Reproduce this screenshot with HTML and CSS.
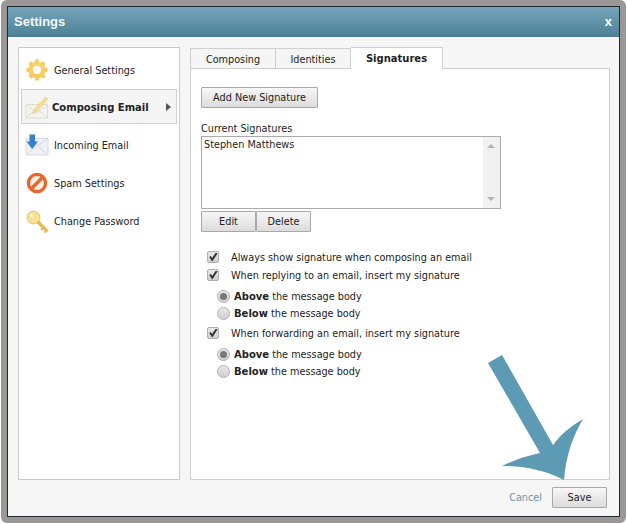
FILE: index.html
```html
<!DOCTYPE html>
<html lang="en">
<head>
<meta charset="utf-8">
<title>Settings</title>
<link rel="stylesheet" href="styles.css">
</head>
<body>
<div class="frame">
  <div class="window">
    <header class="titlebar"><span class="title">Settings</span><span class="close">x</span></header>
    <div class="main">
      <nav class="nav">
        <a class="nav-item">
          <svg class="nav-icon" viewBox="0 0 24 24"><defs><radialGradient id="g1" cx="50%" cy="40%" r="60%"><stop offset="0" stop-color="#ffe9a0"/><stop offset="1" stop-color="#f6c24e"/></radialGradient></defs><circle cx="12" cy="12" r="8.500" fill="url(#g1)"/><g stroke="#f7cb5c" stroke-width="3.800"><path d="M12 1.500v4M12 18.500v4M1.500 12h4M18.500 12h4M4.600 4.600l2.800 2.800M16.600 16.600l2.800 2.800M4.600 19.400l2.800-2.800M16.600 7.400l2.800-2.800"/></g><circle cx="12" cy="12" r="4.800" fill="#fffaf0" stroke="#e8b344" stroke-width=".7"/></svg>
          <span>General Settings</span>
        </a>
        <a class="nav-item nav-item-active">
          <svg class="nav-icon" viewBox="0 0 24 24"><path d="M1 9.500h21.500V23H1z" fill="#f4f3ee" stroke="#dddbd4"/><path d="M1 23l8-7M22.500 23l-8-7M1 9.500l10.500 8.500L22.500 9.500" fill="none" stroke="#dedcd5"/><path d="M20.500 2l2.500 2L11.500 17 7.500 18.500 9 14.500z" fill="#f6de92" stroke="#ecc56a" stroke-width=".5"/></svg>
          <span>Composing Email</span>
          <i class="caret"></i>
        </a>
        <a class="nav-item">
          <svg class="nav-icon" viewBox="0 0 24 24"><path d="M1 5.500h22V22H1z" fill="#eef1f5" stroke="#d5dae0"/><path d="M1 22l9-8M23 22l-9-8M8 6l4.500 7L23 5.500" fill="none" stroke="#d5dae0"/><path d="M4.500 1.500h5.500v7h3L7.200 16 1.500 8.500h3z" fill="#3580c8"/></svg>
          <span>Incoming Email</span>
        </a>
        <a class="nav-item">
          <svg class="nav-icon" viewBox="0 0 24 24"><circle cx="12" cy="12" r="8.600" fill="#fbeee6" stroke="#e8682c" stroke-width="3.400"/><path d="M6 18L18 6" stroke="#e8682c" stroke-width="3.600"/></svg>
          <span>Spam Settings</span>
        </a>
        <a class="nav-item">
          <svg class="nav-icon" viewBox="0 0 24 24"><circle cx="8.500" cy="8.500" r="6.500" fill="#f7e092" stroke="#e4bd5c" stroke-width=".8"/><circle cx="6.500" cy="6.500" r="1.600" fill="#fff8da"/><path d="M12.500 12.500l10 10" stroke="#e5bb58" stroke-width="3.400"/><path d="M18.500 18.500l-2.500 2.500M21.500 21.500l-2 2" stroke="#e5bb58" stroke-width="2.200"/></svg>
          <span>Change Password</span>
        </a>
      </nav>
      <section class="settings">
        <div class="tabs">
          <span class="tab tab-composing">Composing</span>
          <span class="tab tab-identities">Identities</span>
          <span class="tab tab-active">Signatures</span>
        </div>
        <div class="pane">
          <button class="btn btn-add" type="button">Add New Signature</button>
          <div class="field-label">Current Signatures</div>
          <div class="listbox">
            <div class="list-text">Stephen Matthews</div>
            <div class="scrollbar"><i class="arrow-up"></i><i class="arrow-down"></i></div>
          </div>
          <div class="btn-row">
            <button class="btn btn-small" type="button">Edit</button>
            <button class="btn btn-small" type="button">Delete</button>
          </div>
          <div class="options">
            <label class="check"><input type="checkbox" checked><span>Always show signature when composing an email</span></label>
            <label class="check"><input type="checkbox" checked><span>When replying to an email, insert my signature</span></label>
            <label class="radio radio-first"><input type="radio" name="reply" checked><span><b>Above</b> the message body</span></label>
            <label class="radio"><input type="radio" name="reply"><span><b>Below</b> the message body</span></label>
            <label class="check check-forward"><input type="checkbox" checked><span>When forwarding an email, insert my signature</span></label>
            <label class="radio radio-first"><input type="radio" name="forward" checked><span><b>Above</b> the message body</span></label>
            <label class="radio"><input type="radio" name="forward"><span><b>Below</b> the message body</span></label>
          </div>
        </div>
      </section>
    </div>
    <footer class="footer">
      <a class="cancel">Cancel</a>
      <button class="btn btn-save" type="button">Save</button>
    </footer>
    <svg class="callout" viewBox="0 0 110 130"><path d="M0 8L14 0L65 90C73 79 83 71 95 64C85 81 78 100 76 125C58 116 38 111 14 111C26 105 39 101 52 98Z" fill="#5d9ab3"/></svg>
  </div>
</div>
</body>
</html>
```
FILE: styles.css
```css
* { box-sizing: border-box; }
html, body { margin: 0; height: 100%; background: #fff; }
body { font-family: "DejaVu Sans", sans-serif; font-size: 9.7px; color: #222; }

.frame {
  width: 625px; height: 523px; margin-left: 1px;
  padding: 6px 6px 6px 6px;
  background: #9b9797;
  border-radius: 6px;
}
.window {
  position: relative;
  display: flex; flex-direction: column;
  height: 100%;
  background: #f6f6f6;
  border: 1px solid #1f2a30;
}
.titlebar {
  flex: none; height: 30px;
  display: flex; align-items: center; justify-content: space-between;
  padding: 0 7px 2px 6px;
  background: linear-gradient(#75a6bb, #4d8096);
  color: #f4f7f8; font-weight: bold;
}
.title { font-family: "Liberation Sans", sans-serif; font-size: 13px; }
.close { font-size: 13px; font-family: "Liberation Sans", sans-serif; color: #fff; }

.main { flex: 1; min-height: 0; display: flex; gap: 10px; padding: 10px 9px 0 10px; }
.nav {
  flex: none; width: 162px; height: 433px;
  display: flex; flex-direction: column;
  padding: 3px 2px 0;
  background: #fff;
  border: 1px solid #c9c9c9;
}
.nav-item { display: flex; align-items: center; height: 38px; padding-left: 4px; gap: 5px; }
.nav-icon { flex: none; width: 24px; height: 24px; }
.nav-item-active {
  height: 35px; margin: 0 0 2px; padding: 1px 0 0 3px;
  background: #f5f5f5; border: 1px solid #cfcfcf;
  font-size: 10px; font-weight: bold; gap: 3px;
}
.nav-item-active .nav-icon { margin-top: -1px; }
.caret {
  margin-left: auto; margin-right: 5px;
  border-left: 5px solid #555; border-top: 4px solid transparent; border-bottom: 4px solid transparent;
}

.settings { flex: 1; height: 433px; display: flex; flex-direction: column; min-width: 0; }
.tabs { flex: none; display: flex; height: 21px; align-items: flex-end; }
.tab {
  display: flex; align-items: center; justify-content: center;
  height: 20px; padding-top: 1px;
  background: #f5f5f5; border: 1px solid #cfcfcf; border-left: 0; border-bottom: 0;
}
.tab-composing { width: 86px; border-left: 1px solid #cfcfcf; }
.tab-identities { width: 75px; }
.tab-active {
  position: relative; z-index: 1;
  width: 92px; height: 22px; margin-bottom: -1px; padding: 0;
  background: #fff; font-size: 10px; font-weight: bold;
}
.pane {
  flex: 1; padding: 18px 10px 0;
  background: #fff;
  border: 1px solid #cfcfcf;
}

.btn {
  font: inherit; color: #222;
  height: 21px; padding: 0;
  background: linear-gradient(#f7f7f7, #dcdcdc);
  border: 1px solid #a9a9a9; border-radius: 1px;
  display: block;
}
.btn-add { width: 117px; }
.field-label { margin-top: 14px; height: 14px; line-height: 14px; }
.listbox {
  display: flex; width: 300px; height: 73px;
  background: #fff; border: 1px solid #ababab;
}
.list-text { flex: 1; padding: 1px 2px; line-height: 13px; }
.scrollbar { position: relative; width: 17px; background: #f1f1f1; }
.arrow-up, .arrow-down {
  position: absolute; left: 4px;
  border-left: 4px solid transparent; border-right: 4px solid transparent;
}
.arrow-up { top: 7px; border-bottom: 4px solid #b4b4b4; }
.arrow-down { bottom: 7px; border-top: 4px solid #b4b4b4; }
.btn-row { display: flex; margin-top: 2px; }
.btn-small { width: 55px; }

.options { margin-top: 16px; display: flex; flex-direction: column; }
.check, .radio { display: flex; align-items: center; height: 18px; }
.check input, .radio input {
  appearance: none; -webkit-appearance: none;
  flex: none; margin: 0;
  display: flex; align-items: center; justify-content: center;
  background: linear-gradient(#e8e8e8, #cfcfcf);
  border: 1px solid #b0b0b0;
}
.check { padding-left: 6px; }
.check input { width: 12px; height: 12px; border-radius: 2px; margin-right: 12px; }
.check input::before {
  content: ""; width: 9px; height: 9px;
  background: #333;
  clip-path: polygon(8% 50%, 25% 38%, 40% 62%, 82% 0, 100% 12%, 42% 100%);
}
.radio { height: 17px; padding-left: 16px; }
.radio input { width: 13px; height: 13px; border-radius: 50%; margin-right: 4px; }
.radio input:checked::before { content: ""; width: 7px; height: 7px; border-radius: 50%; background: #777; }
.check-forward { margin-top: 2px; }
.radio-first { margin-top: 4px; }
.options b { font-size: 10px; font-weight: bold; }

.footer {
  flex: none; height: 37px;
  display: flex; align-items: center; justify-content: flex-end;
  gap: 10px; padding: 0 12px 1px 0;
}
.cancel { color: #6f95a6; }
.btn-save { width: 55px; height: 21px; }

.callout { position: absolute; left: 480px; top: 348px; width: 110px; height: 130px; }
```
